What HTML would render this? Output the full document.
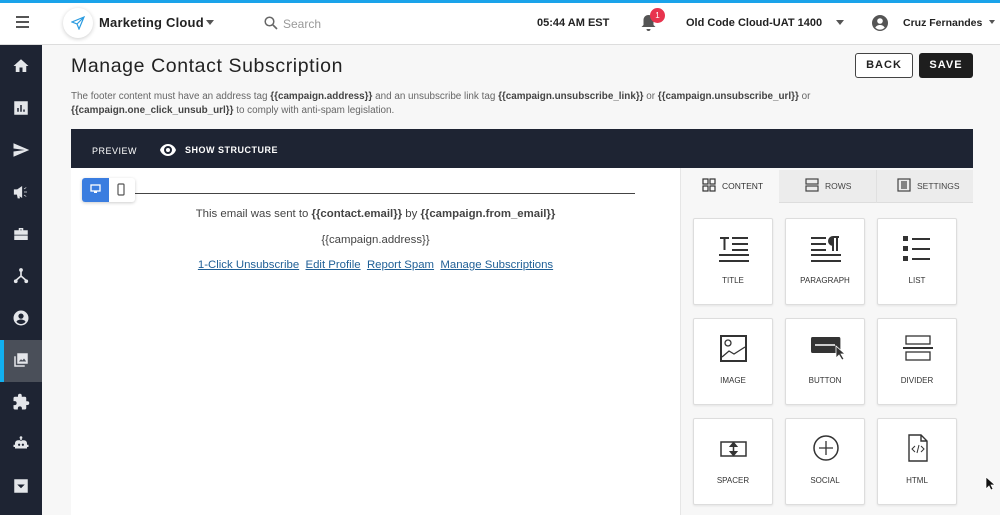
<!DOCTYPE html>
<html><head><style>
*{box-sizing:border-box;margin:0;padding:0}
body{width:1000px;height:515px;overflow:hidden;font-family:"Liberation Sans",sans-serif;background:#f7f7f7;position:relative}
.abs{position:absolute}
.top{left:0;top:0;width:1000px;height:45px;background:#fff;border-top:3px solid #1aa3ea;border-bottom:1px solid #ddd}
.side{left:0;top:45px;width:42px;height:470px;background:#1e2433}
.side svg{position:absolute;left:12px;width:18px;height:18px;fill:#e4e6ea}
.t{font-size:11px;color:#222;font-weight:bold}
.card{position:absolute;width:80px;height:87px;background:#fff;border:1px solid #ddd;border-radius:2px;box-shadow:0 1px 2px rgba(0,0,0,.08)}
.card span{position:absolute;left:0;right:0;top:57px;text-align:center;font-size:8px;color:#333}
.card svg{position:absolute;left:25px;top:15px;width:30px;height:30px;fill:none;stroke:#333;stroke-width:2}
a{color:#1f5f96;text-decoration:underline}
</style></head><body>
<div class="abs top"></div>
<div class="abs" style="left:16px;top:16px;width:13px;height:2px;background:#555;box-shadow:0 5px 0 #555,0 10px 0 #555"></div>
<div class="abs" style="left:63px;top:8px;width:30px;height:30px;border-radius:50%;background:#fff;box-shadow:0 1px 4px rgba(0,0,0,.2)"></div>
<svg class="abs" style="left:71px;top:16px" width="14" height="14" viewBox="0 0 14 14"><path d="M13 1L1 6l5 2 2 5z M6 8l7-7" fill="none" stroke="#2a9be0" stroke-width="1.2"/></svg>
<div class="abs" style="left:99px;top:15px;font-size:13px;color:#222;font-weight:bold;letter-spacing:.2px">Marketing Cloud</div>
<div class="abs" style="left:206px;top:20px;border:4px solid transparent;border-top:5px solid #555"></div>
<svg class="abs" style="left:264px;top:16px" width="14" height="14" viewBox="0 0 14 14"><circle cx="5.5" cy="5.5" r="4.3" fill="none" stroke="#666" stroke-width="1.5"/><path d="M9 9l4 4" stroke="#666" stroke-width="1.6"/></svg>
<div class="abs" style="left:283px;top:17px;font-size:12px;color:#999">Search</div>
<div class="abs t" style="left:537px;top:17px">05:44 AM EST</div>
<svg class="abs" style="left:640px;top:13px" width="17" height="19" viewBox="0 0 17 19"><path d="M8.5 2c-3 0-5 2.3-5 5v5l-2 2h14l-2-2V7c0-2.7-2-5-5-5zM6.5 16h4a2 2 0 01-4 0" fill="#555"/></svg>
<div class="abs" style="left:650px;top:8px;width:15px;height:15px;border-radius:50%;background:#e8344e;color:#fff;font-size:8px;text-align:center;line-height:15px">1</div>
<div class="abs t" style="left:686px;top:17px">Old Code Cloud-UAT 1400</div>
<div class="abs" style="left:836px;top:20px;border:4px solid transparent;border-top:5px solid #555"></div>
<svg class="abs" style="left:872px;top:15px" width="16" height="16" viewBox="0 0 16 16"><circle cx="8" cy="8" r="8" fill="#555"/><circle cx="8" cy="6" r="2.8" fill="#fff"/><path d="M3.2 12.5c1.5-2 3-2.5 4.8-2.5s3.3.5 4.8 2.5a6.5 6.5 0 01-9.6 0z" fill="#fff"/></svg>
<div class="abs t" style="left:903px;top:17px;font-size:10.5px">Cruz Fernandes</div>
<div class="abs" style="left:989px;top:20px;border:3.5px solid transparent;border-top:4.5px solid #555"></div>

<div class="abs side">
<div class="abs" style="left:0;top:295px;width:42px;height:42px;background:#4a4f59"></div>
<div class="abs" style="left:0;top:295px;width:4px;height:42px;background:#12b0f0"></div>
<svg style="top:12px" viewBox="0 0 24 24"><path d="M10 20v-6h4v6h5v-8h3L12 3 2 12h3v8z"/></svg>
<svg style="top:54px" viewBox="0 0 24 24"><path d="M3 3h18v18H3zM7 12v5h2v-5zm4-4v9h2V8zm4 6v3h2v-3z" fill-rule="evenodd"/></svg>
<svg style="top:96px" viewBox="0 0 24 24"><path d="M2 21l21-9L2 3v7l15 2-15 2z"/></svg>
<svg style="top:138px" viewBox="0 0 24 24"><path d="M3 9h4l6-4v14l-6-4H3zm4 6l1 5h2l-1-5zM16 8l3-2M16 12h4M16 16l3 2" stroke="#e4e6ea"/></svg>
<svg style="top:180px" viewBox="0 0 24 24"><path d="M9 4h6v3h6v6H3V7h6zm2 2v1h2V6zM3 14h18v6H3z"/></svg>
<svg style="top:222px" viewBox="0 0 24 24"><path d="M12 3v9l-7 6M12 12l7 6" stroke="#e4e6ea" stroke-width="2.2" fill="none"/><circle cx="12" cy="4" r="2.5"/><circle cx="5" cy="19" r="2.5"/><circle cx="19" cy="19" r="2.5"/></svg>
<svg style="top:264px" viewBox="0 0 24 24"><path d="M12 2a10 10 0 100 20 10 10 0 000-20zm0 4a3.5 3.5 0 110 7 3.5 3.5 0 010-7zm0 14a8 8 0 01-6-3c.5-2 4-3 6-3s5.5 1 6 3a8 8 0 01-6 3z"/></svg>
<svg style="top:306px" viewBox="0 0 24 24"><path d="M7 3h14v14H7zm2 11h10l-3-4-2 2.5-2-1.5zM3 7h2v12h12v2H3z"/></svg>
<svg style="top:348px" viewBox="0 0 24 24"><path d="M20.5 11H19V7a2 2 0 00-2-2h-4V3.5a2.5 2.5 0 00-5 0V5H4a2 2 0 00-2 2v3.8h1.5a2.7 2.7 0 010 5.4H2V20a2 2 0 002 2h3.8v-1.5a2.7 2.7 0 015.4 0V22H17a2 2 0 002-2v-4h1.5a2.5 2.5 0 000-5z"/></svg>
<svg style="top:390px" viewBox="0 0 24 24"><circle cx="12" cy="3.5" r="1.8"/><path d="M11 5h2v3h-2zM4 11a4 4 0 014-4h8a4 4 0 014 4v7H4zm4 2a1.5 1.5 0 103 0 1.5 1.5 0 00-3 0zm5 0a1.5 1.5 0 103 0 1.5 1.5 0 00-3 0zM2 13h2v3H2zm18 0h2v3h-2z" fill-rule="evenodd"/></svg>
<svg style="top:432px" viewBox="0 0 24 24"><path d="M3 3h18v18H3zm4 7h10l-5 5z" fill-rule="evenodd"/></svg>
</div>

<div class="abs" style="left:71px;top:55px;font-size:19.5px;color:#222;letter-spacing:.6px">Manage Contact Subscription</div>
<div class="abs" style="left:855px;top:53px;width:58px;height:25px;border:1px solid #444;border-radius:3px;background:#fff;font-size:11px;font-weight:bold;text-align:center;line-height:23px;letter-spacing:1px;color:#222">BACK</div>
<div class="abs" style="left:919px;top:53px;width:54px;height:25px;border-radius:3px;background:#1e1e1e;font-size:11px;font-weight:bold;text-align:center;line-height:25px;letter-spacing:1px;color:#fff">SAVE</div>
<div class="abs" style="left:71px;top:90px;width:800px;font-size:9.9px;line-height:14px;color:#666">The footer content must have an address tag <b style="color:#444">{{campaign.address}}</b> and an unsubscribe link tag <b style="color:#444">{{campaign.unsubscribe_link}}</b> or <b style="color:#444">{{campaign.unsubscribe_url}}</b> or<br><b style="color:#444">{{campaign.one_click_unsub_url}}</b> to comply with anti-spam legislation.</div>

<div class="abs" style="left:71px;top:129px;width:902px;height:39px;background:#1e2433"></div>
<div class="abs" style="left:92px;top:146px;font-size:9px;color:#fff;letter-spacing:.5px">PREVIEW</div>
<svg class="abs" style="left:160px;top:144px" width="16" height="12" viewBox="0 0 16 12"><path d="M8 0C4 0 1 3 0 6c1 3 4 6 8 6s7-3 8-6c-1-3-4-6-8-6zm0 10a4 4 0 110-8 4 4 0 010 8zm0-6a2 2 0 100 4 2 2 0 000-4z" fill="#fff"/></svg>
<div class="abs" style="left:185px;top:145px;font-size:9px;color:#fff;font-weight:bold;letter-spacing:.5px">SHOW STRUCTURE</div>

<div class="abs" style="left:71px;top:168px;width:609px;height:347px;background:#fff"></div>
<div class="abs" style="left:135px;top:193px;width:500px;height:1px;background:#444"></div>
<div class="abs" style="left:82px;top:178px;width:53px;height:24px;border-radius:3px;background:#fff;box-shadow:0 1px 3px rgba(0,0,0,.2)"></div>
<div class="abs" style="left:82px;top:178px;width:27px;height:24px;border-radius:3px 0 0 3px;background:#3a7de0"></div>
<svg class="abs" style="left:90px;top:184px" width="11" height="10" viewBox="0 0 11 10"><rect x="1" y="1" width="9" height="6" fill="none" stroke="#fff" stroke-width="1.3"/><rect x="4" y="7" width="3" height="2" fill="#fff"/></svg>
<svg class="abs" style="left:117px;top:183px" width="8" height="13" viewBox="0 0 8 13"><rect x="1" y="1" width="6" height="11" rx="1" fill="none" stroke="#555" stroke-width="1.2"/></svg>
<div class="abs" style="left:71px;width:609px;top:208px;text-align:center;font-size:11.4px;color:#444">This email was sent to <b>{{contact.email}}</b> by <b>{{campaign.from_email}}</b></div>
<div class="abs" style="left:71px;width:609px;top:234px;text-align:center;font-size:11.4px;color:#444">{{campaign.address}}</div>
<div class="abs" style="left:71px;width:609px;top:259px;text-align:center;font-size:11.4px"><a>1-Click Unsubscribe</a>&nbsp; <a>Edit Profile</a>&nbsp; <a>Report Spam</a>&nbsp; <a>Manage Subscriptions</a></div>

<div class="abs" style="left:680px;top:168px;width:320px;height:347px;background:#f7f7f7;border-left:1px solid #e6e6e6"></div>
<div class="abs" style="left:779px;top:170px;width:194px;height:33px;background:#ececec;border-bottom:1px solid #ddd"></div>
<div class="abs" style="left:876px;top:170px;width:1px;height:33px;background:#e0e0e0"></div>
<svg class="abs" style="left:702px;top:178px" width="14" height="14" viewBox="0 0 14 14" fill="none" stroke="#333" stroke-width="1.2"><rect x="1" y="1" width="5" height="5"/><rect x="8" y="1" width="5" height="5"/><rect x="1" y="8" width="5" height="5"/><rect x="8" y="8" width="5" height="5"/></svg>
<div class="abs" style="left:722px;top:181px;font-size:8.5px;color:#333">CONTENT</div>
<svg class="abs" style="left:805px;top:178px" width="14" height="14" viewBox="0 0 14 14" fill="none" stroke="#444" stroke-width="1.2"><rect x="1" y="1" width="12" height="5"/><rect x="1" y="8" width="12" height="5"/></svg>
<div class="abs" style="left:825px;top:181px;font-size:8.5px;color:#444">ROWS</div>
<svg class="abs" style="left:897px;top:178px" width="14" height="14" viewBox="0 0 14 14" fill="none" stroke="#444" stroke-width="1.2"><rect x="1" y="1" width="12" height="12"/><path d="M4 4h6M4 6h6M4 8h6M4 10h6"/></svg>
<div class="abs" style="left:917px;top:181px;font-size:8.5px;color:#444">SETTINGS</div>

<div class="card" style="left:693px;top:218px"><svg viewBox="0 0 30 30"><path d="M1 4h9M5.5 4v12M13 4h16M13 10h16M13 16h16M0 21h30M0 27h30"/></svg><span>TITLE</span></div>
<div class="card" style="left:785px;top:218px"><svg viewBox="0 0 30 30"><path d="M0 4h15M0 10h15M0 16h15M0 21h30M0 27h30M22 3v14M26 3v14"/><path d="M22 3h6M22 3a4 4 0 000 8z" fill="#333"/></svg><span>PARAGRAPH</span></div>
<div class="card" style="left:877px;top:218px"><svg viewBox="0 0 30 30"><path d="M9 5h18M9 15h18M9 25h18"/><path d="M0 2h5v5H0zM0 12h5v5H0zM0 22h5v5H0z" fill="#333" stroke="none"/></svg><span>LIST</span></div>
<div class="card" style="left:693px;top:318px"><svg viewBox="0 0 30 30"><rect x="2" y="2" width="25" height="25"/><circle cx="9" cy="9" r="3" stroke-width="1.3"/><path d="M3 23l7-6 5 3 11-7" stroke-width="1.3"/></svg><span>IMAGE</span></div>
<div class="card" style="left:785px;top:318px"><svg viewBox="0 0 30 30" style="left:18px;width:44px"><rect x="0" y="3" width="42" height="16" rx="2" fill="#333" stroke="none" transform="scale(.7 1)"/><path d="M4 11h20" stroke="#fff" stroke-width="1.5"/><path d="M25 12v12l3-3 3 5 2-1-3-5h4z" fill="#333" stroke="#fff" stroke-width=".8"/></svg><span>BUTTON</span></div>
<div class="card" style="left:877px;top:318px"><svg viewBox="0 0 30 30"><rect x="3" y="2" width="24" height="8" stroke-width="1.3"/><rect x="3" y="18" width="24" height="8" stroke-width="1.3"/><path d="M0 14h30"/></svg><span>DIVIDER</span></div>
<div class="card" style="left:785px;top:418px"><svg viewBox="0 0 30 30"><circle cx="15" cy="14" r="12" stroke-width="1.5"/><path d="M15 7v14M8 14h14" stroke-width="1.3"/></svg><span>SOCIAL</span></div>
<div class="card" style="left:693px;top:418px"><svg viewBox="0 0 30 30"><rect x="2" y="8" width="25" height="14" stroke-width="1.5"/><path d="M14.5 10v10" stroke-width="1.5"/><path d="M12 12l2.5-3 2.5 3zM12 18l2.5 3 2.5-3z" fill="#333"/></svg><span>SPACER</span></div>
<div class="card" style="left:877px;top:418px"><svg viewBox="0 0 30 30"><path d="M6 1h12l6 6v20H6zM18 1v6h6" stroke-width="1.4"/><path d="M12 12l-3 3 3 3M18 12l3 3-3 3M16 11l-2 8" stroke-width="1"/></svg><span>HTML</span></div>
<svg class="abs" style="left:985px;top:476px" width="10" height="15" viewBox="0 0 10 15"><path d="M1 1v12l3-3 2 4 2-1-2-4h4z" fill="#111" stroke="#fff" stroke-width=".7"/></svg>
</body></html>
